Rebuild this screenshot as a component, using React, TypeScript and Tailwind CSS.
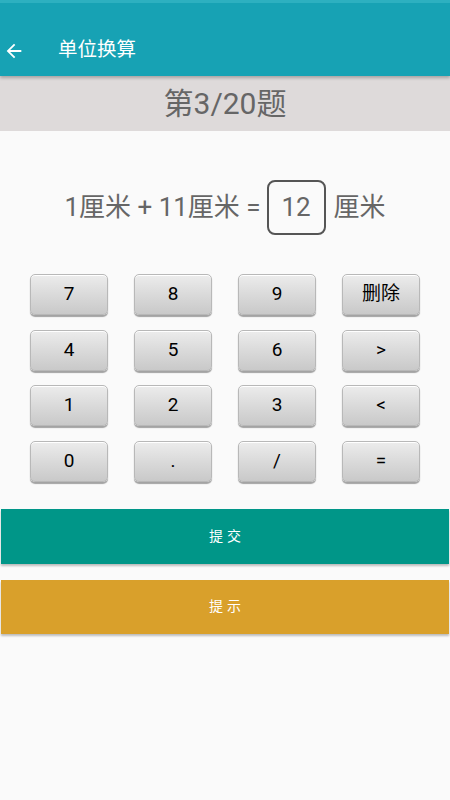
import React from "react";

const keys = ["7", "8", "9", "删除", "4", "5", "6", ">", "1", "2", "3", "<", "0", ".", "/", "="];

export default function App() {
  return (
    <div
      className="w-[450px] h-[800px] bg-[#fafafa] flex flex-col"
      style={{ fontFamily: "Roboto, 'Noto Sans CJK SC', sans-serif" }}
    >
      <div className="h-[76px] bg-[#17a2b4] flex items-end pb-[15px] shadow-[0_2px_3px_rgba(0,0,0,0.25)] relative z-10 border-t-[3px] border-[#2db0c0]">
        <svg width="22" height="22" viewBox="0 0 24 24" className="ml-[3px] mb-[-1px]" fill="white">
          <path d="M20 11H7.83l5.59-5.59L12 4l-8 8 8 8 1.41-1.41L7.83 13H20v-2z" />
        </svg>
        <span className="ml-[33px] text-white text-[19.5px] leading-[22px]">单位换算</span>
      </div>
      <div className="h-[55px] bg-[#dedada] flex items-center justify-center text-[30px] text-[#666]">
        第3/20题
      </div>
      <div className="h-[143px] flex items-center justify-center text-[26px] text-[#666] pt-[10px]">
        <span>1厘米 + 11厘米 =</span>
        <div className="ml-[6px] w-[59px] h-[55px] border-[2px] border-[#555] rounded-[8px] flex items-center justify-center">
          12
        </div>
        <span className="ml-[8px]">厘米</span>
      </div>
      <div className="grid grid-cols-[78px_78px_78px_78px] gap-x-[26px] gap-y-[14.5px] px-[30px]">
        {keys.map((k) => (
          <div
            key={k}
            className="h-[41px] rounded-[5px] bg-[linear-gradient(180deg,#ececec_0%,#dadada_50%,#c9c9c9_100%)] border border-[#b8b8b8] shadow-[0_2px_1px_rgba(0,0,0,0.35),inset_0_1px_0_#fff] flex items-center justify-center text-[19px] text-black"
          >
            {k}
          </div>
        ))}
      </div>
      <div className="mt-[27px] mx-[1px] h-[55px] bg-[#009688] shadow-[0_2px_2px_rgba(0,0,0,0.25)] flex items-center justify-center text-white text-[14px] tracking-[4px] pl-[4px]">
        提交
      </div>
      <div className="mt-[16px] mx-[1px] h-[54px] bg-[#d9a02b] shadow-[0_2px_2px_rgba(0,0,0,0.25)] flex items-center justify-center text-white text-[14px] tracking-[4px] pl-[4px]">
        提示
      </div>
    </div>
  );
}
